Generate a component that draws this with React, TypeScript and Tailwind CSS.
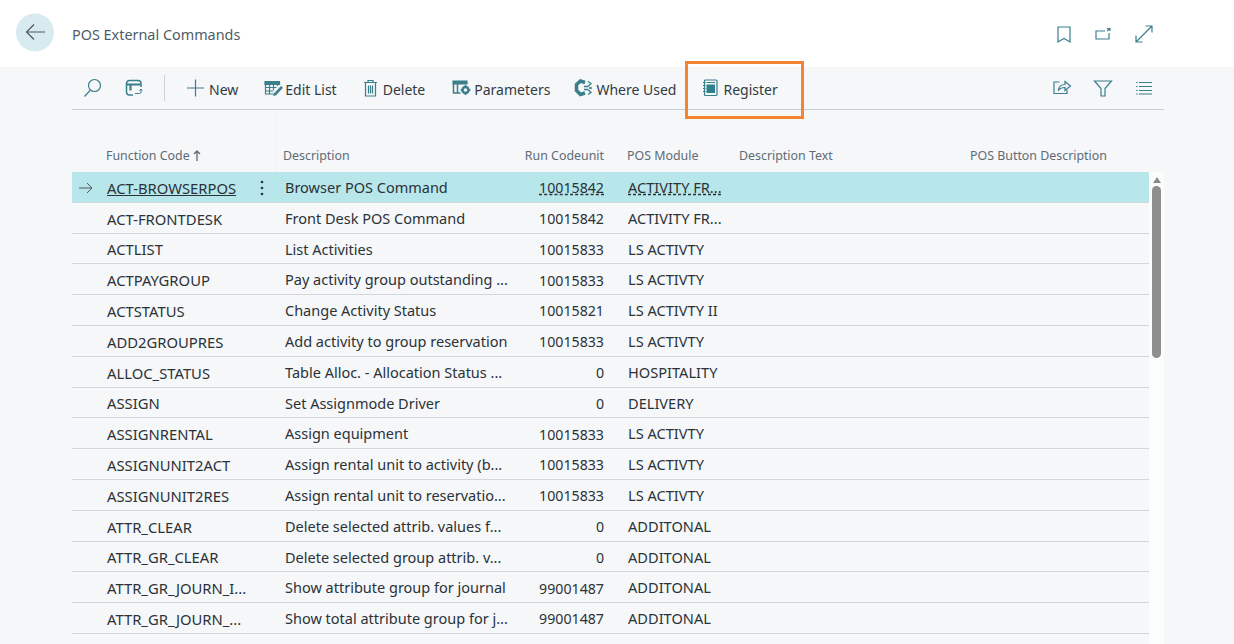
import type { ReactNode } from "react";

const rows = [
  ["ACT-BROWSERPOS", "Browser POS Command", "10015842", "ACTIVITY FR..."],
  ["ACT-FRONTDESK", "Front Desk POS Command", "10015842", "ACTIVITY FR..."],
  ["ACTLIST", "List Activities", "10015833", "LS ACTIVTY"],
  ["ACTPAYGROUP", "Pay activity group outstanding ...", "10015833", "LS ACTIVTY"],
  ["ACTSTATUS", "Change Activity Status", "10015821", "LS ACTIVTY II"],
  ["ADD2GROUPRES", "Add activity to group reservation", "10015833", "LS ACTIVTY"],
  ["ALLOC_STATUS", "Table Alloc. - Allocation Status ...", "0", "HOSPITALITY"],
  ["ASSIGN", "Set Assignmode Driver", "0", "DELIVERY"],
  ["ASSIGNRENTAL", "Assign equipment", "10015833", "LS ACTIVTY"],
  ["ASSIGNUNIT2ACT", "Assign rental unit to activity (b...", "10015833", "LS ACTIVTY"],
  ["ASSIGNUNIT2RES", "Assign rental unit to reservatio...", "10015833", "LS ACTIVTY"],
  ["ATTR_CLEAR", "Delete selected attrib. values f...", "0", "ADDITONAL"],
  ["ATTR_GR_CLEAR", "Delete selected group attrib. v...", "0", "ADDITONAL"],
  ["ATTR_GR_JOURN_I...", "Show attribute group for journal", "99001487", "ADDITONAL"],
  ["ATTR_GR_JOURN_...", "Show total attribute group for j...", "99001487", "ADDITONAL"],
];

function Icon({ children, w = 20 }: { children: ReactNode; w?: number }) {
  return (
    <svg width={w} height={20} viewBox={`0 0 ${w} 20`} fill="none" stroke="#3a7f8c" strokeWidth="1.2" className="shrink-0">
      {children}
    </svg>
  );
}

function ToolButton({ icon, label, className }: { icon: ReactNode; label: string; className: string }) {
  return (
    <div className={`flex items-center ${className}`}>
      {icon}
      <span className="whitespace-nowrap pt-[2px] text-[14px] text-[#333b42]">{label}</span>
    </div>
  );
}

export default function App() {
  return (
    <main className="relative h-[644px] w-[1234px] overflow-hidden bg-[#f5f7f9] font-['Noto_Sans','Open_Sans',sans-serif]">
      <header className="flex h-[67px] items-center bg-white pl-4 pr-[80px]">
        <div className="flex h-[38px] w-[38px] -translate-y-[1.5px] items-center justify-center rounded-full bg-[#d8ebf0]">
          <svg width="24" height="24" viewBox="0 0 24 24" fill="none" stroke="#4d5a60" strokeWidth="1.2">
            <path d="M22 11.5H3.5M11 4l-7.5 7.5L11 19" />
          </svg>
        </div>
        <h1 className="ml-[18px] pt-[3px] text-[14.4px] text-[#505c66]">POS External Commands</h1>
        <div className="ml-auto flex items-center gap-[20px]">
          <Icon w={20}>
            <path d="M4 3h12v15l-6-3.500L4 18z" />
          </Icon>
          <Icon w={20}>
            <path d="M11 7H2v8h13v-6M13 7l3-2.500M16 7V4.500h-3" />
          </Icon>
          <Icon w={20}>
            <path d="M2 18L18 2M11.500 2H18v6.500M2 11.500V18h6.500" />
          </Icon>
        </div>
      </header>

      <div className="mx-[72px] w-[1092px]">
        <div className="flex h-[43px] items-center border-b border-[#c9ced4]">
          <div className="ml-[11px]">
            <Icon>
              <circle cx="11.500" cy="7.500" r="6" />
              <path d="M7.500 12L1.500 18.500" />
            </Icon>
          </div>
          <div className="ml-[21px]">
            <Icon>
              <path d="M9 17H5.500a3 3 0 0 1-3-3V5.500a3 3 0 0 1 3-3h8.500a3 3 0 0 1 3 3V9" strokeWidth="1.500" />
              <path d="M3 6.500h13.500M6.500 6.500v6" strokeWidth="2.200" />
              <path d="M11 15.500h4.500a1.500 1.500 0 0 0 1.500-1.500v-2.500M15.500 12.500L17 11l1.500 1.500" strokeWidth="1" />
            </Icon>
          </div>
          <div className="ml-[20px] h-[26px] w-px bg-[#cfd3d8]" />
          <ToolButton
            className="ml-[21px] gap-[4px]"
            label="New"
            icon={
              <Icon w={19}>
                <path d="M9.500 1.500v17M1 10h17" />
              </Icon>
            }
          />
          <ToolButton
            className="ml-[26px] gap-[1px]"
            label="Edit List"
            icon={
              <Icon w={20}>
                <path d="M1 3.500h14.500v3H1z" fill="#3a7f8c" />
                <path d="M1.500 6v10H10M1.500 9.500h11M1.500 13h8M5.500 6v10M9.500 6v6M13.500 6v2" />
                <path d="M10 15.500l7-7.500 2 1.800-7 7.500-2.800 1z" fill="#3a7f8c" stroke="none" />
              </Icon>
            }
          />
          <ToolButton
            className="ml-[26px] gap-[5px]"
            label="Delete"
            icon={
              <Icon w={15}>
                <path d="M1 4.500h13M5 4.500V2.500h5v2M2.500 4.500v13.500h10V4.500" />
                <path d="M5.500 7.500v8M7.500 7.500v8M9.500 7.500v8" />
              </Icon>
            }
          />
          <ToolButton
            className="ml-[27px] gap-[3px]"
            label="Parameters"
            icon={
              <Icon w={19}>
                <path d="M1 3h14v3H1z" fill="#3a7f8c" />
                <path d="M1.500 6v9h7M5.500 6v9" strokeWidth="1.500" />
                <circle cx="13.500" cy="12" r="3" strokeWidth="2.500" />
                <path d="M13.500 7v2M13.500 15v2M8.500 12h2M16.500 12h2" strokeWidth="1.500" />
              </Icon>
            }
          />
          <ToolButton
            className="ml-[24px] gap-[3px]"
            label="Where Used"
            icon={
              <Icon w={19}>
                <path d="M11 4.500L6.500 3 2.500 6.500v6l4 4 4.500-1.500" strokeWidth="3.500" />
                <path d="M10 8.500h4.500M10 11.500h4.500M14 3.500l3 2-2.500 2.500M14 16.500l3-2-2.500-2.500M15 10h3" strokeWidth="1.300" />
              </Icon>
            }
          />
          <ToolButton
            className="ml-[27px] gap-[5px]"
            label="Register"
            icon={
              <Icon w={15}>
                <rect x="1.500" y="2" width="12.500" height="15.500" rx="1" />
                <path d="M3.500 6.500h8.500v8.500H3.500z" fill="#2f7f8c" stroke="none" />
                <path d="M3.500 4.500h8.500" strokeWidth="1" />
                <path d="M0 4.500h2.500M0 7.500h2.500M0 10.500h2.500M0 13.500h2.500" strokeWidth="1" />
              </Icon>
            }
          />
          <div className="ml-auto flex items-center gap-[21px] pr-[10px]">
            <Icon>
              <path d="M7.500 4H2v11.500h13V12" />
              <path d="M6.500 12c.5-4 3-5.500 6.500-5.500V3.500l5.500 4.500-5.500 4.500V9.500c-3 0-5 .8-6.500 2.500z" />
            </Icon>
            <Icon>
              <path d="M1.500 3h17l-6.500 7.500V18H8v-7.500z" />
            </Icon>
            <Icon>
              <path d="M5 4.500h13M5 8.500h13M5 12.500h13M5 16h13M2 4.500h1.500M2 8.500h1.500M2 12.500h1.500M2 16h1.500" />
            </Icon>
          </div>
        </div>

        <div className="flex h-[62px] items-end text-[12.400px] text-[#5f6b75]">
          <div className="flex h-[62px] w-[205px] items-end border-r border-[#eef0f2] pb-[6px] pl-[34px]">
            <span className="whitespace-nowrap">Function Code</span>
            <svg width="8" height="11" viewBox="0 0 8 11" fill="none" stroke="#5f6b75" strokeWidth="1.300" className="mb-[5px] ml-[3px]">
              <path d="M4 11V1M1 4l3-3 3 3" />
            </svg>
          </div>
          <div className="w-[225px] whitespace-nowrap pb-[6px] pl-[6px]">Description</div>
          <div className="w-[102px] whitespace-nowrap pb-[6px] text-right">Run Codeunit</div>
          <div className="w-[135px] whitespace-nowrap pb-[6px] pl-[23px]">POS Module</div>
          <div className="w-[231px] whitespace-nowrap pb-[6px]">Description Text</div>
          <div className="whitespace-nowrap pb-[6px]">POS Button Description</div>
        </div>

        <div className="flex">
          <div className="w-[1077px]">
            {rows.map((r, i) => {
              const selected = i === 0;
              return (
                <div
                  key={r[0]}
                  className={`flex h-[30.800px] items-center border-b border-[#d3d6da] pt-[2px] text-[#2b3238] ${selected ? "bg-[#b7e6eb]" : ""}`}
                >
                  <div className="flex w-[34px] justify-center pr-[6px]">
                    {selected && (
                      <svg width="14" height="12" viewBox="0 0 14 12" fill="none" stroke="#4d5a60" strokeWidth="1">
                        <path d="M0 6h13M8 1l5 5-5 5" />
                      </svg>
                    )}
                  </div>
                  <div className={`w-[146px] whitespace-nowrap pl-[1px] text-[14.800px] ${selected ? "underline" : ""}`}>{r[0]}</div>
                  <div className="flex w-[25px] justify-center pr-[6px]">
                    {selected && (
                      <svg width="4" height="16" viewBox="0 0 4 16" fill="#2b3238">
                        <circle cx="2" cy="2" r="1.300" />
                        <circle cx="2" cy="8" r="1.300" />
                        <circle cx="2" cy="14" r="1.300" />
                      </svg>
                    )}
                  </div>
                  <div className="w-[225px] whitespace-nowrap pl-[8px] text-[14.500px]">{r[1]}</div>
                  <div className={`w-[102px] whitespace-nowrap text-right text-[14.200px] ${selected ? "underline decoration-dashed underline-offset-[1px]" : ""}`}>{r[2]}</div>
                  <div className={`ml-[24px] whitespace-nowrap text-[14.600px] ${selected ? "underline decoration-dashed underline-offset-[1px]" : ""}`}>{r[3]}</div>
                </div>
              );
            })}
          </div>
          <div className="h-[472px] w-[15px] bg-[#fbfcfc] pl-[3px] pt-[5px]">
            <div className="ml-[0.500px] h-0 w-0 border-x-[4px] border-b-[6px] border-x-transparent border-b-[#8a8a8a]" />
            <div className="mt-[3px] h-[172px] w-[9px] rounded-full bg-[#8e8e8e]" />
          </div>
        </div>
      </div>

      <div className="absolute left-[685px] top-[61px] h-[58px] w-[119px] border-[3px] border-[#f28432]" />
    </main>
  );
}
